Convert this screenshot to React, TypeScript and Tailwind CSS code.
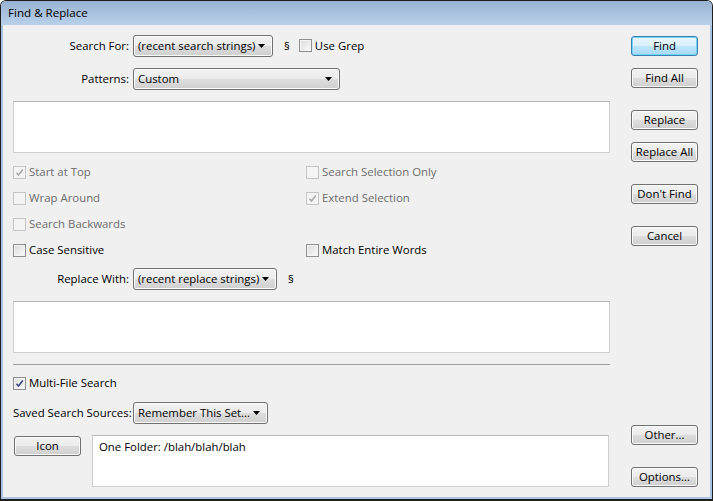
import React from "react";

const btnBase =
  "w-[67px] h-[20px] rounded-[3px] border text-[11.4px] leading-none text-black flex items-center justify-center";
const btnNormal =
  "border-[#707070] bg-[linear-gradient(to_bottom,#f2f2f2_0%,#ebebeb_50%,#dddddd_51%,#cfcfcf_100%)] shadow-[inset_0_0_0_1px_#fbfbfb]";
const btnDefault =
  "border-[#3c7fb1] bg-[linear-gradient(to_bottom,#eaf6fd_0%,#d9f0fc_50%,#bee6fd_51%,#a7d9f5_100%)] shadow-[inset_0_0_0_1px_#6fd4f8]";

function Button({ label, primary = false, className = "" }: { label: string; primary?: boolean; className?: string }) {
  return <div className={`${btnBase} ${primary ? btnDefault : btnNormal} ${className}`}>{label}</div>;
}

function Arrow() {
  return (
    <svg width="7" height="4" viewBox="0 0 7 4" className="shrink-0">
      <path d="M0 0 H7 L3.5 4 Z" fill="#000" />
    </svg>
  );
}

function Dropdown({ text, width }: { text: string; width: string }) {
  return (
    <div
      className={`${width} shrink-0 h-[22px] rounded-[3px] border border-[#707070] bg-[linear-gradient(to_bottom,#f2f2f2_0%,#ebebeb_50%,#dddddd_51%,#cfcfcf_100%)] shadow-[inset_0_0_0_1px_#fbfbfb] flex items-center justify-between pl-[4px] pr-[7px]`}
    >
      <span className="text-[11.4px] text-black whitespace-nowrap">{text}</span>
      <Arrow />
    </div>
  );
}

function Checkbox({ checked = false, disabled = false }: { checked?: boolean; disabled?: boolean }) {
  return (
    <div
      className={`w-[13px] h-[13px] border shrink-0 flex items-center justify-center ${
        disabled
          ? "border-[#c5c5c5] bg-[#f4f4f4]"
          : "border-[#8e8f8f] bg-[linear-gradient(135deg,#dcdcdc,#fbfbfb)] shadow-[inset_0_0_0_1px_#f4f4f4]"
      }`}
    >
      {checked && (
        <svg width="9" height="9" viewBox="0 0 9 9">
          <path
            d="M1.5 4.8 L3.5 7 L7.8 1.5"
            fill="none"
            stroke={disabled ? "#a9a9a9" : "#3b4b7a"}
            strokeWidth="1.6"
          />
        </svg>
      )}
    </div>
  );
}

function Check({ label, checked = false, disabled = false }: { label: string; checked?: boolean; disabled?: boolean }) {
  return (
    <div className="h-[26px] flex items-center gap-[3px]">
      <Checkbox checked={checked} disabled={disabled} />
      <span className={`text-[11.4px] whitespace-nowrap ${disabled ? "text-[#6d6d6d]" : "text-black"}`}>{label}</span>
    </div>
  );
}

function LabelRow({ label, children }: { label: string; children: React.ReactNode }) {
  return (
    <div className="h-[22px] flex items-center">
      <span className="w-[120px] shrink-0 pr-[4px] text-right text-[11.4px] text-black whitespace-nowrap">{label}</span>
      {children}
    </div>
  );
}

export default function App() {
  return (
    <div
      className="w-[713px] h-[501px] flex flex-col border border-b-2 border-[#1e1e1e] rounded-t-[6px] overflow-hidden bg-[#f0f0f0]"
      style={{ fontFamily: "'Open Sans', 'Noto Sans', sans-serif" }}
    >
      {/* title bar */}
      <div className="h-[24px] shrink-0 bg-[linear-gradient(to_bottom,#98b3d3,#b9d0e9)] flex items-center pl-[7px] text-[11.6px] text-black">
        Find &amp; Replace
      </div>

      <div className="flex-1 flex border-l-2 border-r-2 border-b-2 border-[#a9c4e3]">
        {/* left panel */}
        <div className="w-[608px] pl-[10px] flex flex-col">
          <div className="mt-[10px]">
            <LabelRow label="Search For:">
              <Dropdown text="(recent search strings)" width="w-[140px]" />
              <span className="ml-[11px] text-[11.4px] text-black">§</span>
              <div className="ml-[9px] flex items-center gap-[3px]">
                <Checkbox />
                <span className="text-[11.4px] text-black">Use Grep</span>
              </div>
            </LabelRow>
          </div>

          <div className="mt-[11px]">
            <LabelRow label="Patterns:">
              <Dropdown text="Custom" width="w-[207px]" />
            </LabelRow>
          </div>

          <div className="mt-[11px] w-[597px] h-[52px] bg-white border border-[#cfcfcf] border-t-[#b8b8b8]" />

          <div className="mt-[6px] grid grid-cols-[293px_1fr]">
            <Check label="Start at Top" checked disabled />
            <Check label="Search Selection Only" disabled />
            <Check label="Wrap Around" disabled />
            <Check label="Extend Selection" checked disabled />
            <Check label="Search Backwards" disabled />
            <div className="h-[26px]" />
            <Check label="Case Sensitive" />
            <Check label="Match Entire Words" />
          </div>

          <div className="mt-[5px]">
            <LabelRow label="Replace With:">
              <Dropdown text="(recent replace strings)" width="w-[144px]" />
              <span className="ml-[11px] text-[11.4px] text-black">§</span>
            </LabelRow>
          </div>

          <div className="mt-[11px] w-[597px] h-[52px] bg-white border border-[#cfcfcf] border-t-[#b8b8b8]" />

          <div className="mt-[11px] w-[597px] h-px bg-[#a0a0a0]" />

          <div className="mt-[5px]">
            <Check label="Multi-File Search" checked />
          </div>

          <div className="mt-[6px]">
            <div className="h-[22px] flex items-center">
              <span className="w-[120px] shrink-0 pr-[4px] text-[11.4px] text-black whitespace-nowrap">Saved Search Sources:</span>
              <Dropdown text="Remember This Set..." width="w-[135px]" />
            </div>
          </div>

          <div className="mt-[11px] flex items-start">
            <Button label="Icon" className="mt-[1px] ml-[1px]" />
            <div className="ml-[11px] w-[517px] h-[52px] bg-white border border-[#cfcfcf] border-t-[#b8b8b8] pl-[6px] pt-[2px] text-[11.4px] text-black">
              One Folder: /blah/blah/blah
            </div>
          </div>
        </div>

        {/* right buttons */}
        <div className="ml-[20px] flex flex-col pb-[10px]">
          <Button label="Find" primary className="mt-[11px]" />
          <Button label="Find All" className="mt-[12px]" />
          <Button label="Replace" className="mt-[22px]" />
          <Button label="Replace All" className="mt-[12px]" />
          <Button label="Don't Find" className="mt-[22px]" />
          <Button label="Cancel" className="mt-[22px]" />
          <div className="flex-1" />
          <Button label="Other..." />
          <Button label="Options..." className="mt-[22px]" />
        </div>
      </div>
    </div>
  );
}
